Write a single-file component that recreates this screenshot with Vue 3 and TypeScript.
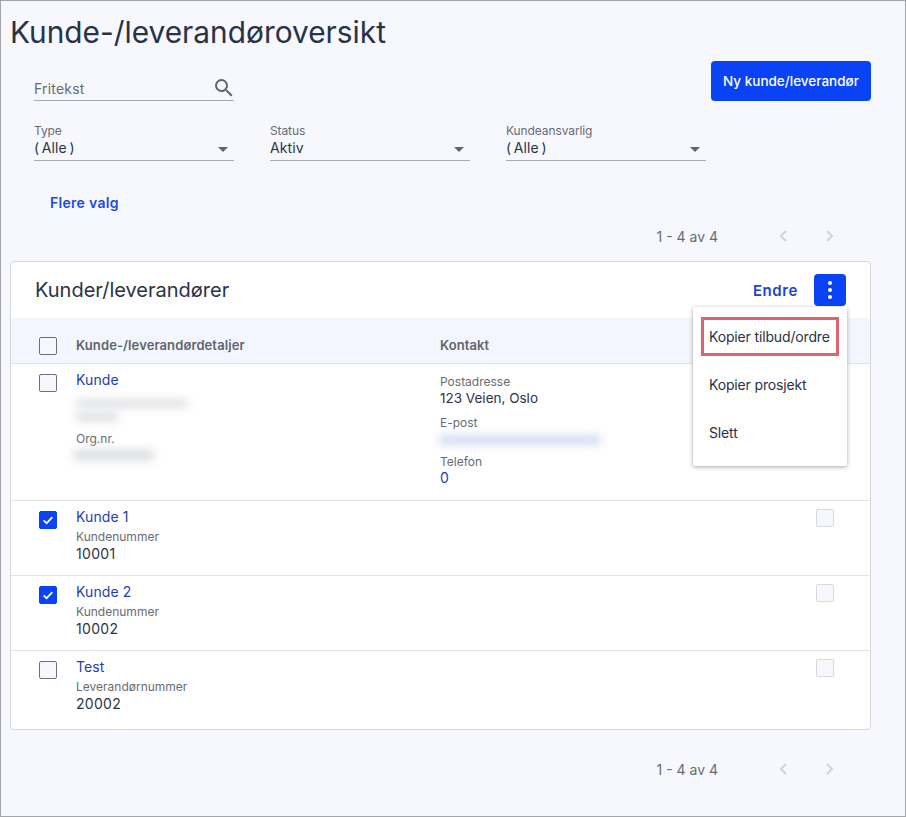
<script setup lang="ts">
interface Row { name: string; label: string; value: string; checked: boolean }
const rows: Row[] = [
  { name: 'Kunde 1', label: 'Kundenummer', value: '10001', checked: true },
  { name: 'Kunde 2', label: 'Kundenummer', value: '10002', checked: true },
  { name: 'Test', label: 'Leverandørnummer', value: '20002', checked: false },
]
const filters = [
  { label: 'Type', value: '(\u2009Alle\u2009)' },
  { label: 'Status', value: 'Aktiv' },
  { label: 'Kundeansvarlig', value: '(\u2009Alle\u2009)' },
]
</script>

<template>
  <div class="page">
    <h1 class="title">Kunde-/leverandøroversikt</h1>

    <div class="filters">
      <div class="filter-fields">
        <div class="search">
          <span>Fritekst</span>
          <svg class="search-icon" viewBox="0 0 24 24" width="24" height="24" fill="#62646c">
            <path d="M15.5 14h-.79l-.28-.27A6.47 6.47 0 0 0 16 9.5 6.5 6.5 0 1 0 9.5 16c1.61 0 3.09-.59 4.23-1.57l.27.28v.79l5 4.99L20.49 19l-4.99-5zm-6 0C7.01 14 5 11.99 5 9.5S7.01 5 9.5 5 14 7.01 14 9.5 11.99 14 9.5 14z" />
          </svg>
        </div>
        <div class="selects">
          <div v-for="f in filters" :key="f.label" class="select">
            <div class="select-label">{{ f.label }}</div>
            <div class="select-value">{{ f.value }}</div>
            <span class="caret"></span>
          </div>
        </div>
      </div>
      <button class="primary">Ny kunde/leverandør</button>
    </div>

    <a class="more">Flere valg</a>

    <div class="pager pager-top">
      <span>1 - 4 av 4</span>
      <svg viewBox="0 0 10 14" width="10" height="14" class="chev"><path d="M8 2 3 7l5 5" /></svg>
      <svg viewBox="0 0 10 14" width="10" height="14" class="chev"><path d="m2 2 5 5-5 5" /></svg>
    </div>

    <section class="card">
      <header class="card-head">
        <h2>Kunder/leverandører</h2>
        <div class="actions">
          <a class="edit">Endre</a>
          <button class="dots" aria-label="Flere handlinger"><i></i><i></i><i></i></button>
        </div>
      </header>

      <div class="menu">
        <div class="menu-item highlighted">Kopier tilbud/ordre</div>
        <div class="menu-item">Kopier prosjekt</div>
        <div class="menu-item">Slett</div>
      </div>

      <div class="row thead">
        <span class="box"></span>
        <strong>Kunde-/leverandørdetaljer</strong>
        <strong>Kontakt</strong>
      </div>

      <div class="row first">
        <span class="box"></span>
        <div>
          <a class="name">Kunde</a>
          <div class="blur b1"></div>
          <div class="blur b2"></div>
          <div class="small org">Org.nr.</div>
          <div class="blur b3"></div>
        </div>
        <div class="contact">
          <div class="small">Postadresse</div>
          <div class="address">123 Veien, Oslo</div>
          <div class="small gap">E-post</div>
          <div class="blur mail"></div>
          <div class="small gap2">Telefon</div>
          <a class="val phone">0</a>
        </div>
      </div>

      <div v-for="r in rows" :key="r.name" class="row item">
        <span class="box main-box" :class="{ checked: r.checked }">
          <svg v-if="r.checked" viewBox="0 0 18 18" width="18" height="18"><path d="m4.6 9.3 3 2.9 5.8-6" fill="none" stroke="#fff" stroke-width="1.7" /></svg>
        </span>
        <div>
          <a class="name">{{ r.name }}</a>
          <div class="small">{{ r.label }}</div>
          <div class="val">{{ r.value }}</div>
        </div>
        <div></div>
        <span class="box light"></span>
      </div>
    </section>

    <div class="pager pager-bottom">
      <span>1 - 4 av 4</span>
      <svg viewBox="0 0 10 14" width="10" height="14" class="chev"><path d="M8 2 3 7l5 5" /></svg>
      <svg viewBox="0 0 10 14" width="10" height="14" class="chev"><path d="m2 2 5 5-5 5" /></svg>
    </div>
  </div>
</template>

<style>
html, body { margin: 0; background: #f6f8fd; }
</style>

<style scoped>
.page {
  box-sizing: border-box;
  width: 906px;
  height: 817px;
  overflow: hidden;
  padding: 0 34px 0 9px;
  border: 1px solid #a3a5ab;
  background: #f6f8fd;
  color: #2a3346;
  font-family: Inter, "Liberation Sans", sans-serif;
}
.title {
  margin: 13px 0 0;
  font-size: 29.85px;
  line-height: 36px;
  font-weight: 400;
  letter-spacing: 0;
}
.filters {
  display: flex;
  justify-content: space-between;
  align-items: flex-start;
  height: 111px;
  margin-top: 11px;
}
.filter-fields { padding: 11px 0 0 24px; }
.search {
  position: relative;
  box-sizing: border-box;
  width: 200px;
  height: 29px;
  padding-top: 8px;
  border-bottom: 1px solid #a9abb3;
  font-size: 14px;
  line-height: 18px;
  letter-spacing: .2px;
  color: #696b73;
}
.search-icon { position: absolute; right: -2px; top: 4px; }
.selects { display: flex; gap: 36px; margin-top: 23px; }
.select {
  position: relative;
  box-sizing: border-box;
  width: 200px;
  height: 37px;
  border-bottom: 1px solid #a9abb3;
}
.select-label { font-size: 12px; line-height: 16px; color: #696b73; margin-top: -1px; letter-spacing: -.1px; }
.select-value { font-size: 14px; line-height: 19px; margin-top: -1px; letter-spacing: .1px; }
.caret {
  position: absolute;
  right: 6px;
  top: 23px;
  border-left: 5px solid transparent;
  border-right: 5px solid transparent;
  border-top: 5px solid #62646c;
}
.primary {
  width: 160px;
  height: 40px;
  margin-top: 0;
  border: 0;
  border-radius: 4px;
  background: #0a43f5;
  color: #fff;
  font: 500 13.5px Inter, "Liberation Sans", sans-serif;
}
.more {
  display: block;
  margin: 22px 0 0 40px;
  font-size: 14px;
  line-height: 18px;
  font-weight: 600;
  letter-spacing: .3px;
  color: #1b4bdc;
}
.pager {
  display: flex;
  align-items: center;
  justify-content: flex-end;
  height: 20px;
  font-size: 14px;
  color: #696b73;
}
.pager-top { margin-top: 14px; }
.pager-bottom { margin-top: 29px; }
.pager span { margin-right: 60px; }
.chev { fill: none; stroke: #d2d4d9; stroke-width: 2; margin-right: 37px; }
.chev:last-child { margin-right: 36px; }
.card {
  position: relative;
  box-sizing: border-box;
  width: 861px;
  height: 469px;
  margin-top: 15px;
  border: 1px solid #d5d7dc;
  border-radius: 4px;
  background: #fff;
}
.card-head {
  display: flex;
  justify-content: space-between;
  align-items: center;
  height: 56px;
  padding: 0 24px 0 24px;
}
.card-head h2 { margin: 0; font-size: 20px; line-height: 26px; font-weight: 400; }
.actions { display: flex; align-items: center; gap: 16px; }
.edit { font-size: 15px; font-weight: 600; color: #1b46bf; letter-spacing: .6px; }
.dots {
  display: flex;
  flex-direction: column;
  align-items: center;
  justify-content: center;
  gap: 3px;
  width: 32px;
  height: 32px;
  padding: 0;
  border: 0;
  border-radius: 4px;
  background: #0a43f5;
}
.dots i { width: 4px; height: 4px; border-radius: 50%; background: #fff; }
.menu {
  position: absolute;
  z-index: 2;
  left: 682px;
  top: 45px;
  box-sizing: border-box;
  width: 154px;
  height: 159px;
  padding-top: 10px;
  background: #fff;
  border-radius: 2px;
  box-shadow: 0 1px 4px rgba(0, 0, 0, .35);
}
.menu-item {
  box-sizing: border-box;
  height: 48px;
  padding: 8px 0 0 16px;
  font-size: 14px;
  line-height: 24px;
  white-space: nowrap;
  letter-spacing: -.15px;
}
.highlighted {
  height: 39px;
  margin: 0 8px 9px 8px;
  border: 3px solid #db6573;
  padding: 6px 0 0 5px;
  line-height: 21px;
}
.row {
  display: grid;
  grid-template-columns: 18px 345px 1fr 18px;
  column-gap: 19px;
  padding: 0 36px 0 28px;
  border-bottom: 1px solid #e2e4e8;
}
.thead {
  height: 46px;
  box-sizing: border-box;
  align-items: center;
  padding-top: 9px;
  background: #f3f6fe;
  font-size: 13px;
  letter-spacing: .1px;
  color: #62646c;
}
.thead strong { font-weight: 600; }
.first { height: 137px; box-sizing: border-box; padding-top: 7px; }
.item { height: 75px; box-sizing: border-box; padding-top: 7px; }
.item:last-of-type { height: 78px; border-bottom: 0; }
.row > .box { margin-top: 3px; }
.thead > .box { margin-top: 2px; }
.row > .light { margin-top: 1px; }
.box {
  display: block;
  box-sizing: border-box;
  width: 18px;
  height: 18px;
  border: 1px solid #6e7076;
  border-radius: 2px;
  background: #f6f8fd;
}
.box svg { display: block; margin: -1px; }
.checked { background: #0a43f5; border-color: #0a43f5; }
.light { border-color: #d8dade; }
.name { display: block; font-size: 14px; line-height: 18px; color: #1b3fb5; font-weight: 400; letter-spacing: .1px; }
.small { font-size: 12px; line-height: 16px; color: #696b73; margin-top: 3px; }
.val { display: block; font-size: 14px; line-height: 17px; color: #2a3346; letter-spacing: .3px; }
.address { font-size: 13.5px; line-height: 17px; color: #2a3346; }
.contact { margin-top: 3px; }
.contact .small:first-child { margin-top: 0; }
.gap { margin-top: 8px; }
.gap2 { margin-top: 10px; }
.phone { color: #1b3fb5; margin-top: -1px; }
.blur { background: #d8dadd; filter: blur(5px); border-radius: 2px; }
.b1 { width: 112px; height: 7px; margin: 11px 0 0 0; }
.b2 { width: 42px; height: 8px; margin: 6px 0 0 0; }
.org { margin-top: 10px; }
.b3 { width: 80px; height: 10px; margin: 3px 0 0 -2px; }
.mail { width: 162px; height: 8px; margin: 5px 0 0 -1px; background: #ccd5f2; }
</style>
